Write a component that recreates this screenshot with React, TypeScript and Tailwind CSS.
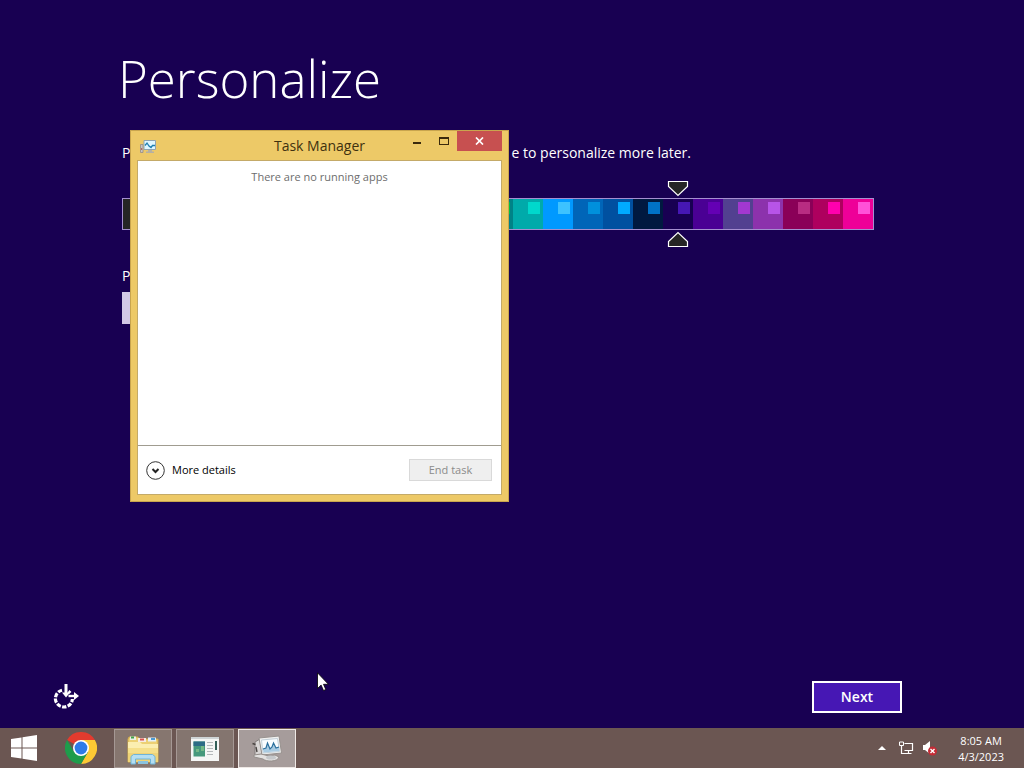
import { useState } from 'react';

const colors = [
  { name: 'Charcoal', base: 'bg-[#252525]', accent: 'bg-[#f4b300]' },
  { name: 'Graphite', base: 'bg-[#252525]', accent: 'bg-[#78ba00]' },
  { name: 'Slate', base: 'bg-[#252525]', accent: 'bg-[#2673ec]' },
  { name: 'Ash', base: 'bg-[#252525]', accent: 'bg-[#ae113d]' },
  { name: 'Brown', base: 'bg-[#632f00]', accent: 'bg-[#632f00]' },
  { name: 'Red', base: 'bg-[#b01e00]', accent: 'bg-[#ff2e12]' },
  { name: 'Rose', base: 'bg-[#c1004f]', accent: 'bg-[#ff1d77]' },
  { name: 'Plum', base: 'bg-[#7200ac]', accent: 'bg-[#aa40ff]' },
  { name: 'Olive', base: 'bg-[#696800]', accent: 'bg-[#91d100]' },
  { name: 'Leaf', base: 'bg-[#15992a]', accent: 'bg-[#56c5ff]' },
  { name: 'Green', base: 'bg-[#00a600]', accent: 'bg-[#00d8cc]' },
  { name: 'Forest', base: 'bg-[#004a00]', accent: 'bg-[#199900]' },
  { name: 'Pine', base: 'bg-[#008287]', accent: 'bg-[#00c13f]' },
  { name: 'Teal', base: 'bg-[#00aaaa]', accent: 'bg-[#00d8cc]' },
  { name: 'Sky', base: 'bg-[#0099ff]', accent: 'bg-[#3dc2ff]' },
  { name: 'Azure', base: 'bg-[#0065b8]', accent: 'bg-[#0090dc]' },
  { name: 'Blue', base: 'bg-[#0050a0]', accent: 'bg-[#00aaff]' },
  { name: 'Navy', base: 'bg-[#001940]', accent: 'bg-[#0072c6]' },
  { name: 'Indigo', base: 'bg-[#180052]', accent: 'bg-[#4617b4]' },
  { name: 'Violet', base: 'bg-[#4a0094]', accent: 'bg-[#6400b4]' },
  { name: 'Dusk', base: 'bg-[#524090]', accent: 'bg-[#a238d0]' },
  { name: 'Orchid', base: 'bg-[#8c32ac]', accent: 'bg-[#b754e8]' },
  { name: 'Wine', base: 'bg-[#8a0058]', accent: 'bg-[#b82c82]' },
  { name: 'Crimson', base: 'bg-[#ae005e]', accent: 'bg-[#ff00ae]' },
  { name: 'Magenta', base: 'bg-[#ee0098]', accent: 'bg-[#ff52d8]' },
];

function Marker({ flip = false }: { flip?: boolean }) {
  return (
    <svg width="22" height="17" viewBox="0 0 22 17" className={flip ? 'rotate-180' : ''} aria-hidden="true">
      <path d="M1.500 1.500h19v5L11 15.500 1.500 6.500z" fill="#252525" stroke="#fff" strokeWidth="1.200" />
    </svg>
  );
}

function ColorStrip() {
  const [selected, setSelected] = useState(18);

  return (
    <div className="relative flex h-8 w-[752px] border border-[#a58fd0]">
      {colors.map((color, index) => (
        <button
          key={color.name}
          type="button"
          aria-label={color.name}
          aria-pressed={index === selected}
          onClick={() => setSelected(index)}
          className={`flex flex-1 items-start justify-end pt-[3px] pr-[3px] ${color.base}`}
        >
          <span className={`size-3 ${color.accent}`} />
        </button>
      ))}
      <div
        className="pointer-events-none absolute -top-[19px] -bottom-[19px] flex -translate-x-1/2 flex-col justify-between"
        style={{ left: `${((selected + 0.5) / colors.length) * 100}%` }}
      >
        <Marker />
        <Marker flip />
      </div>
    </div>
  );
}

function MonitorIcon() {
  return (
    <svg width="32" height="28" viewBox="0 0 32 28" aria-hidden="true">
      <path d="M4 7l5-3 2 15-7 2z" fill="#d9d6d5" stroke="#857f7e" />
      <path d="M1.500 8.500l3 1M5 12l1 5" stroke="#4a4543" strokeWidth="1.400" />
      <path d="M8 3l20-2 2.500 17L11 20z" fill="#f1f1f0" stroke="#98928f" />
      <path d="M10.500 5l16-1.500 2 13L12 18z" fill="#fafdff" stroke="#c3d0d8" />
      <path d="M12.500 17.500l-.5-3.500 3-1 1.500-5 2.500 6 2-2 1.500-4 2.500 5 3-1 .4 4z" fill="#a9cbe2" />
      <path d="M12 14l3-1 1.500-5 2.500 6 2-2 1.500-4 2.500 5 3-1" fill="none" stroke="#2b6f9c" strokeWidth="1.200" />
      <path d="M3 20l7-1 8 2 6-1 4 2c-1 5-13 5-16 2l-9-2z" fill="#e3e1e0" stroke="#948e8b" />
      <ellipse cx="20" cy="22.500" rx="5" ry="2" fill="#c5c8cb" />
    </svg>
  );
}

function SmallMonitorIcon() {
  return (
    <svg width="18" height="16" viewBox="0 0 18 16" aria-hidden="true">
      <path d="M1.500 5.500h2.500v8H1.500z" fill="#c9c4c0" stroke="#948c86" strokeWidth="0.800" />
      <path d="M2.700 9v2" stroke="#b0524a" />
      <path d="M5 1.500h11.500v9H5z" fill="#dff6ff" stroke="#8fa3b0" />
      <path d="M6 6.500l2-2.500 2 3 2 1.500 1.500-2H16" fill="none" stroke="#1f7fb0" strokeWidth="1.300" />
      <path d="M9 11h4v1.500h2V14H7v-1.500h2z" fill="#b5b0a3" />
    </svg>
  );
}

function TaskManager() {
  return (
    <section
      aria-label="Task Manager"
      className="absolute top-[130px] left-[130px] flex h-[372px] w-[379px] flex-col border border-[#c9a54e] bg-[#edc967] px-[6px] pb-[6px]"
    >
      <header className="grid h-[29px] grid-cols-[1fr_auto_1fr] items-start">
        <span className="pt-2 pl-[2px]">
          <SmallMonitorIcon />
        </span>
        <h2 className="pt-[5px] text-sm leading-5 text-[#3f310f]">Task Manager</h2>
        <div className="flex h-5 justify-end">
          <button type="button" aria-label="Minimize" className="flex w-[27px] items-center justify-center pt-1">
            <span className="h-[2px] w-2 bg-[#3b2a0c]" />
          </button>
          <button type="button" aria-label="Maximize" className="flex w-[27px] items-center justify-center">
            <span className="h-2 w-[10px] border border-t-2 border-[#3b2a0c]" />
          </button>
          <button type="button" aria-label="Close" className="flex w-[45px] items-center justify-center bg-[#c75050]">
            <svg width="9" height="8" viewBox="0 0 9 8" aria-hidden="true">
              <path d="M1 0.500l7 7M8 0.500l-7 7" stroke="#fff" strokeWidth="1.700" />
            </svg>
          </button>
        </div>
      </header>
      <div className="flex flex-1 flex-col border border-[#c4aa68] bg-white">
        <p className="flex-1 pt-2 text-center text-[11px] leading-4 text-[#6d6d6d]">There are no running apps</p>
        <footer className="flex h-[49px] items-center justify-between border-t border-[#a09c90] px-2 pr-[9px]">
          <button type="button" className="flex items-center gap-[7px] text-[11px] text-black">
            <svg width="19" height="19" viewBox="0 0 19 19" fill="none" aria-hidden="true">
              <circle cx="9.500" cy="9.500" r="8.800" stroke="#333" />
              <path d="M6.500 8l3 3 3-3" stroke="#222" strokeWidth="2" />
            </svg>
            More details
          </button>
          <button type="button" disabled className="h-[22px] w-[83px] border border-[#d9d9d9] bg-[#efefef] text-[11px] text-[#8b8b8b]">
            End task
          </button>
        </footer>
      </div>
    </section>
  );
}

function EaseOfAccessIcon() {
  return (
    <svg width="26" height="26" viewBox="0 0 26 26" fill="none" stroke="#fff" aria-hidden="true">
      <path d="M9 6.200A8.500 8.500 0 1 0 19.400 15" strokeWidth="3.200" strokeDasharray="4.300 1.400" />
      <path d="M15.500 7.300a8.500 8.500 0 0 1 1.800 1.700" strokeWidth="3" />
      <path d="M13 0v10" strokeWidth="3" />
      <path d="M15.500 12H22" strokeWidth="2.400" />
      <path d="M9 8.500h8L13 13.500zM21 8v8l5-4z" fill="#fff" stroke="none" />
    </svg>
  );
}

function ChromeIcon() {
  return (
    <svg width="32" height="32" viewBox="0 0 32 32" aria-hidden="true">
      <path d="M16 16L2.140 8A16 16 0 0 1 29.860 8z" fill="#e33b2e" />
      <path d="M16 8h13.860A16 16 0 0 1 16 32l6.930-12z" fill="#fcc934" />
      <path d="M2.140 8A16 16 0 0 0 16 32l6.930-12L16 16 9.070 20z" fill="#1e9c4b" />
      <circle cx="16" cy="16" r="8" fill="#fff" />
      <circle cx="16" cy="16" r="6.400" fill="#2e7be8" />
    </svg>
  );
}

function FolderIcon() {
  return (
    <svg width="34" height="32" viewBox="0 0 34 32" aria-hidden="true">
      <path d="M2 4l1-2h9l1 2h19v23H2z" fill="#ecd074" stroke="#cda94c" />
      <path d="M4 1.500h6V5H4z" fill="#e9f0e4" />
      <path d="M5 1.500h3v2H5z" fill="#3fa34d" />
      <path d="M12 3h8v4h-8z" fill="#f6ebe2" />
      <path d="M14 3.500h4v2h-4z" fill="#d9534f" />
      <path d="M22 2.500h8v4h-8z" fill="#e6f1f8" />
      <path d="M25 3h4v2h-4z" fill="#4b9ad4" />
      <path d="M2 7h12l2 2h16v18H2z" fill="#fbeeb0" />
      <path d="M2 13h30v14H2z" fill="#f5df89" />
      <path d="M2 18h30v9H2z" fill="#efd377" />
      <path d="M5 29v-7.500l2.500-2h19l2.500 2V29h-4.500v-5h-15v5z" fill="#b4def2" stroke="#6fb4d8" />
      <path d="M12 26h10v3H12z" fill="#8ac4e0" />
    </svg>
  );
}

function WindowListIcon() {
  return (
    <svg width="28" height="24" viewBox="0 0 28 24" aria-hidden="true">
      <path d="M0 0h28v24H0z" fill="#f5f6f5" />
      <path d="M0 0h28v2H0z" fill="#cfd4d6" />
      <path d="M2.500 4.500h11.500v15H2.500z" fill="#46997c" />
      <path d="M2.500 4.500h11.500v4.500H2.500z" fill="#2d6c86" />
      <path d="M5 12h3v3H5zM10 9h3v5h-3z" fill="#75b887" />
      <path d="M16 5.500h6M16 8.500h6M16 11.500h6M16 14.500h6M16 17.500h6" stroke="#b4b8ba" />
      <path d="M24 4h2v9h-2z" fill="#315f58" />
    </svg>
  );
}

function Taskbar() {
  return (
    <footer className="flex h-10 items-stretch bg-[#6b5652] text-white">
      <button type="button" aria-label="Start" className="flex w-12 items-center justify-center">
        <svg width="26" height="26" viewBox="0 0 26 26" fill="#fff" aria-hidden="true">
          <path d="M0 4l10.500-1.500v10H0zM11.500 2.300L26 0v12.500H11.500zM0 13.500h10.500v10L0 22zM11.500 13.500H26V26l-14.500-2.200z" />
        </svg>
      </button>
      <button type="button" aria-label="Google Chrome" className="flex w-[66px] items-center justify-center">
        <ChromeIcon />
      </button>
      <div className="flex gap-1 pt-px">
        <button type="button" aria-label="File Explorer" className="flex w-[58px] items-center justify-center border border-[#a59894] bg-[#86766f] pt-1">
          <FolderIcon />
        </button>
        <button type="button" aria-label="Applications" className="flex w-[58px] items-center justify-center border border-[#a59894] bg-[#84756f]">
          <WindowListIcon />
        </button>
        <button type="button" aria-label="Task Manager" className="flex w-[58px] items-center justify-center border border-[#eee8e5] bg-[#a69c9b]">
          <MonitorIcon />
        </button>
      </div>
      <div className="ml-auto flex items-center pr-5">
        <button type="button" aria-label="Show hidden icons">
          <svg width="8" height="4" viewBox="0 0 8 4" fill="#fff" aria-hidden="true">
            <path d="M4 0l4 4H0z" />
          </svg>
        </button>
        <svg width="16" height="14" viewBox="0 0 16 14" fill="none" stroke="#fff" className="ml-3" aria-label="Network">
          <path d="M6.500 2.500h8v7h-8M3.500 5v7.500h10M10.500 9.500v3" strokeWidth="1.200" />
          <path d="M1.500 1v3.500h4V1zM3.500 4.500v2" />
        </svg>
        <svg width="16" height="16" viewBox="0 0 16 16" className="ml-2" aria-label="Muted">
          <path d="M1 5h2l5-4v13L3 10H1z" fill="#fff" />
          <circle cx="10.500" cy="11" r="4.500" fill="#c42b35" />
          <path d="M8.500 9l4 4M12.500 9l-4 4" stroke="#fff" strokeWidth="1.400" />
        </svg>
        <div className="ml-5 pt-[2px] text-center text-[11px] leading-4">
          <p>8:05 AM</p>
          <p>4/3/2023</p>
        </div>
      </div>
    </footer>
  );
}

export default function App() {
  return (
    <div className="relative flex min-h-screen flex-col overflow-hidden bg-[#180052] font-['Open_Sans','Noto_Sans',sans-serif] text-white">
      <main className="flex flex-1 flex-col pt-11">
        <div className="pl-[122px]">
          <h1 className="-ml-1 text-[51px] leading-[68px] font-light">Personalize</h1>
          <p className="mt-[31px] flex w-[569px] justify-between text-sm leading-5">
            <span>P</span>
            <span>e to personalize more later.</span>
          </p>
          <div className="mt-[35px]">
            <ColorStrip />
          </div>
          <label htmlFor="pc-name" className="mt-9 block text-sm leading-5">
            P
          </label>
          <input id="pc-name" type="text" className="mt-[6px] block h-8 w-[320px] bg-[#d3c8e6] px-2 text-sm text-black" />
        </div>
        <div className="mt-auto flex items-center justify-between pr-[122px] pb-[15px] pl-[53px]">
          <button type="button" aria-label="Ease of access">
            <EaseOfAccessIcon />
          </button>
          <button type="button" className="h-8 w-[90px] border-2 border-white bg-[#4617b4] text-sm font-semibold">
            Next
          </button>
        </div>
      </main>
      <Taskbar />
      <TaskManager />
      <svg width="12" height="19" viewBox="0 0 12 19" className="absolute top-[672px] left-[317px]" aria-hidden="true">
        <path d="M0.500 0.800v15.700l3.600-3.400 2.400 5.400 2.300-1-2.300-5.200h4.900z" fill="#fff" stroke="#000" strokeWidth="0.800" />
      </svg>
    </div>
  );
}
